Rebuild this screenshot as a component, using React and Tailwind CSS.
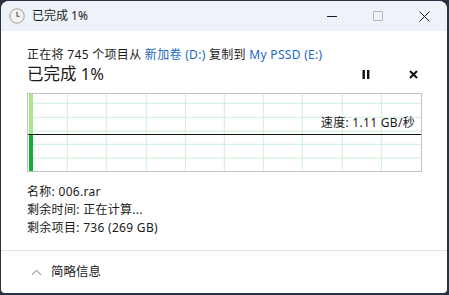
import React from 'react'

const font = { fontFamily: '"Noto Sans", "Noto Sans CJK SC", sans-serif' }

function ClockIcon() {
  return (
    <svg width="16" height="16" viewBox="0 0 16 16">
      <circle cx="8" cy="8" r="7.2" fill="#f4f4f4" stroke="#9c9c9c" strokeWidth="1" />
      <path d="M8 3.8 V8.3 H10.8" fill="none" stroke="#555" strokeWidth="1.1" />
    </svg>
  )
}

function SpeedChart() {
  const cols = [39.3, 78.3, 118.3, 157.3, 196.3, 235.3, 274.3, 314.3, 353.3]
  const rows = [9.3, 23.3, 37, 50.3, 64]
  return (
    <svg width="393" height="77" viewBox="0 0 393 77" className="block">
      {cols.map(x => (
        <line key={'c' + x} x1={x} y1="0" x2={x} y2="77" stroke="#cdefd6" strokeWidth="1" />
      ))}
      {rows.map(y => (
        <line key={'r' + y} x1="0" y1={y} x2="393" y2={y} stroke="#cdefd6" strokeWidth="1" />
      ))}
      <rect x="1" y="0" width="4" height="40.5" fill="#a9e68e" />
      <rect x="1" y="40.5" width="4" height="36.5" fill="#12b22e" />
      <line x1="0" y1="40.5" x2="393" y2="40.5" stroke="#111" strokeWidth="1.2" />
    </svg>
  )
}

export default function App() {
  return (
    <div className="w-[449px] h-[295px] bg-[#2b3142] p-[1px] pr-[2px] pb-[2px]" style={font}>
      <div className="w-full h-full bg-white rounded-t-[8px] rounded-b-[4px] overflow-hidden flex flex-col text-[#1b1b1b]">
        {/* Title bar */}
        <div className="h-[30px] bg-[#eef2f9] flex items-center shrink-0">
          <div className="pl-[8px] pr-[7px] flex items-center">
            <ClockIcon />
          </div>
          <span className="text-[12px] leading-none">已完成 1%</span>
          <div className="ml-auto flex items-center h-full">
            <div className="w-[46px] h-full flex items-center justify-center">
              <div className="w-[10px] h-[1px] bg-[#1b1b1b]" />
            </div>
            <div className="w-[46px] h-full flex items-center justify-center">
              <div className="w-[10px] h-[10px] border border-[#b5b5b5] rounded-[1px]" />
            </div>
            <div className="w-[46px] h-full flex items-center justify-center">
              <svg width="11" height="11" viewBox="0 0 11 11">
                <path d="M0.5 0.5 L10.5 10.5 M10.5 0.5 L0.5 10.5" stroke="#1b1b1b" strokeWidth="1" />
              </svg>
            </div>
          </div>
        </div>

        {/* Body */}
        <div className="px-[26px] pt-[15px] tracking-[0.3px]">
          <div className="text-[12px] leading-[18px]">
            正在将 745 个项目从 <span className="text-[#1a67c5]">新加卷 (D:)</span> 复制到{' '}
            <span className="text-[#1a67c5]">My PSSD (E:)</span>
          </div>
          <div className="flex items-center h-[20px]">
            <span className="text-[16.5px] leading-none tracking-normal">已完成 1%</span>
            <div className="ml-auto flex items-center">
              <svg width="8" height="9" viewBox="0 0 8 9" className="mr-[39px]">
                <rect x="0.5" y="0" width="2.4" height="9" fill="#111" />
                <rect x="5" y="0" width="2.4" height="9" fill="#111" />
              </svg>
              <svg width="9" height="9" viewBox="0 0 9 9" className="mr-[3px]">
                <path d="M1 1 L8 8 M8 1 L1 8" stroke="#111" strokeWidth="2" />
              </svg>
            </div>
          </div>

          {/* Chart */}
          <div className="mt-[9px] w-[395px] border border-[#c2c2c2] relative">
            <SpeedChart />
            <div className="absolute right-[6px] top-[20px] text-[12px] leading-[18px]">
              速度: 1.11 GB/秒
            </div>
          </div>

          {/* Details */}
          <div className="mt-[11px] text-[12px] leading-[18px]">
            <div>名称: 006.rar</div>
            <div>剩余时间: 正在计算...</div>
            <div>剩余项目: 736 (269 GB)</div>
          </div>
        </div>

        {/* Footer */}
        <div className="mt-auto border-t border-[#e3e3e3] h-[43px] flex items-center pl-[30px] shrink-0">
          <svg width="11" height="7" viewBox="0 0 11 7" className="mr-[9px]">
            <path d="M0.8 6 L5.5 1.2 L10.2 6" fill="none" stroke="#777" strokeWidth="1" />
          </svg>
          <span className="text-[12.5px] leading-none">简略信息</span>
        </div>
      </div>
    </div>
  )
}
